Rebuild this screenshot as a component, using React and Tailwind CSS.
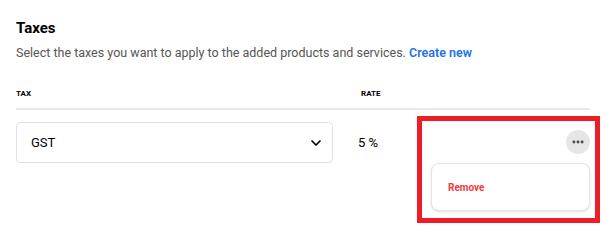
import { ChevronDown, MoreHorizontal } from 'lucide-react';

export default function App() {
  return (
    <div className="relative w-[610px] h-[240px] bg-white font-['Roboto',sans-serif] text-black">
      <div className="px-4 pt-[18px]">
        <h2 className="text-[15px] font-bold leading-[20px]">Taxes</h2>
        <p className="mt-[6px] text-[12.5px] leading-[18px] text-[#555]">
          Select the taxes you want to apply to the added products and services.{' '}
          <span className="font-semibold text-[#1a73e8]">Create new</span>
        </p>

        <div className="mt-[27px] flex w-[574px] border-b-2 border-[#e8e8e8] pb-[9px] text-[8px] font-bold leading-[10px]">
          <div className="w-[345px]">TAX</div>
          <div>RATE</div>
        </div>

        <div className="mt-[12px] flex w-[574px] items-start">
          <div className="flex h-[41px] w-[317px] items-center justify-between rounded-[4px] border border-[#e2e2e2] pl-[14px] pr-[8px] text-[13px]">
            <span>GST</span>
            <ChevronDown size={16} strokeWidth={2.5} />
          </div>
          <div className="ml-[25px] flex h-[41px] items-center text-[13px]">5 %</div>
          <div className="ml-auto flex flex-col items-end">
            <div className="mt-[8px] flex h-[24px] w-[24px] items-center justify-center rounded-full bg-[#e6e6e6]">
              <MoreHorizontal size={14} strokeWidth={3} className="text-[#444]" />
            </div>
            <div className="mt-[9px] flex h-[48px] w-[159px] items-center rounded-[8px] border border-[#e4e4e4] bg-white pl-[16px] text-[10px] font-bold text-[#f03c3c] shadow-sm">
              Remove
            </div>
          </div>
        </div>
      </div>
      <div className="pointer-events-none absolute left-[417px] top-[116px] h-[107px] w-[183px] border-[5px] border-[#ee1c25]" />
    </div>
  );
}
